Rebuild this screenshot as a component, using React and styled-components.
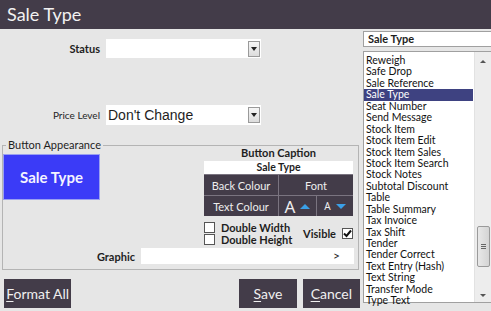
import styled, { createGlobalStyle } from "styled-components";

const Global = createGlobalStyle`
  html, body { margin: 0; padding: 0; background: #e6e6e6; }
  body { font-family: "Lato", "Noto Sans", sans-serif; color: #1e1e1e; }
  * { box-sizing: border-box; }
`;

const Screen = styled.div`
  width: 491px;
  height: 311px;
  overflow: hidden;
  background: #e6e6e6;
  display: flex;
  flex-direction: column;
`;

const TitleBar = styled.div`
  height: 29px;
  background: #433c49;
  color: #f2f2f2;
  font-size: 18px;
  line-height: 29px;
  padding-left: 7px;
  flex: none;
`;

const Body = styled.div`
  display: flex;
  flex: 1;
`;

const LeftPane = styled.div`
  width: 360px;
  display: flex;
  flex-direction: column;
`;

const FieldRow = styled.div`
  display: flex;
  align-items: center;
  margin-top: ${(p) => p.$top}px;
  height: ${(p) => p.$h || 19}px;
`;

const Label = styled.div`
  width: ${(p) => p.$w || 106}px;
  text-align: right;
  padding-right: 6px;
  font-size: ${(p) => p.$size || 11}px;
  font-weight: ${(p) => (p.$bold ? 700 : 400)};
`;

const Select = styled.div`
  width: 155px;
  height: 100%;
  background: #fff;
  display: flex;
  align-items: center;
  justify-content: space-between;
  padding: 0 1px 0 2px;
  font-family: "Liberation Sans", Arial, sans-serif;
  font-size: 14px;
`;

const DropBtn = styled.div`
  width: 12px;
  height: 16px;
  border: 1px solid #9a9a9a;
  background: linear-gradient(#f6f6f6, #dcdcdc);
  display: flex;
  align-items: center;
  justify-content: center;
  &::after {
    content: "";
    border-left: 3px solid transparent;
    border-right: 3px solid transparent;
    border-top: 4px solid #222;
  }
`;

const Group = styled.fieldset`
  margin: 14px 1px 0 2px;
  padding: 0 0 5px;
  border: 1px solid #b4b4b4;
  min-width: 0;
`;

const Legend = styled.legend`
  margin-left: 3px;
  padding: 0 2px;
  font-size: 11px;
  color: #1e1e1e;
  line-height: 12px;
`;

const GroupInner = styled.div`
  display: grid;
  grid-template-columns: 98px 1fr;
  align-items: start;
`;

const Preview = styled.div`
  width: 97px;
  height: 46px;
  margin-top: 3px;
  background: #3b3bf7;
  border: 1px solid #9aa0f0;
  color: #f4f4ff;
  font-weight: 700;
  font-size: 15px;
  display: flex;
  align-items: center;
  justify-content: center;
`;

const CaptionCol = styled.div`
  margin: -4px 0 0 103px;
  width: 149px;
  display: flex;
  flex-direction: column;
`;

const CaptionTitle = styled.div`
  text-align: center;
  font-weight: 700;
  font-size: 11px;
  line-height: 12px;
`;

const CaptionInput = styled.div`
  background: #fff;
  height: 13px;
  margin-top: 2px;
  text-align: center;
  font-weight: 700;
  font-size: 10.5px;
  line-height: 13px;
`;

const Grid = styled.div`
  display: grid;
  grid-template-columns: 74px 37px 36px;
  grid-template-rows: 20px 20px;
  gap: 1px;
  background: #7a7480;
  padding: 1px 0 0;
`;

const Cell = styled.div`
  background: #433c49;
  color: #eeeeee;
  font-size: 11px;
  display: flex;
  align-items: center;
  justify-content: center;
  gap: 5px;
  grid-column: ${(p) => p.$span || "auto"};
`;

const BigA = styled.span`
  font-size: ${(p) => p.$size}px;
  line-height: 1;
  font-family: "Noto Sans", sans-serif;
`;

const Tri = styled.span`
  width: 0;
  height: 0;
  border-left: 5px solid transparent;
  border-right: 5px solid transparent;
  ${(p) =>
    p.$down
      ? "border-top: 5px solid #3aa0e8;"
      : "border-bottom: 5px solid #3aa0e8;"}
`;

const Checks = styled.div`
  display: flex;
  justify-content: space-between;
  align-items: center;
  margin-top: 5px;
`;

const CheckList = styled.div`
  display: flex;
  flex-direction: column;
`;

const CheckRow = styled.div`
  display: flex;
  align-items: center;
  gap: 6px;
  font-size: 11px;
  font-weight: 700;
  height: 12px;
`;

const Box = styled.span`
  width: 11px;
  height: 11px;
  background: #fff;
  border: 1px solid #555;
  display: flex;
  align-items: center;
  justify-content: center;
`;

const GraphicRow = styled.div`
  display: flex;
  align-items: center;
  margin-top: 3px;
  height: 16px;
`;

const GraphicInput = styled.div`
  width: 213px;
  height: 16px;
  background: #fff;
  font-size: 12px;
  text-align: right;
  padding-right: 14px;
  line-height: 16px;
`;

const ButtonBar = styled.div`
  display: flex;
  gap: 6px;
  margin: 9px 0 0 4px;
`;

const Btn = styled.div`
  width: ${(p) => p.$w}px;
  height: 29px;
  background: #433c49;
  color: #f0f0f0;
  font-size: 14px;
  display: flex;
  align-items: center;
  justify-content: center;
  margin-left: ${(p) => p.$ml || 0}px;
  u { text-decoration-thickness: 1px; text-underline-offset: 2px; }
`;

const RightPane = styled.div`
  width: 128px;
  margin-left: 3px;
  display: flex;
  flex-direction: column;
`;

const Search = styled.div`
  margin-top: 2px;
  height: 16px;
  background: #fff;
  border: 1px solid #a0a0a0;
  border-right: none;
  font-size: 11px;
  font-weight: 700;
  padding-left: 4px;
  line-height: 14px;
`;

const ListBox = styled.div`
  margin-top: 4px;
  height: 252px;
  background: #fff;
  border: 1px solid #a0a0a0;
  border-right: none;
  display: flex;
`;

const Items = styled.div`
  flex: 1;
  padding-top: 3px;
`;

const Item = styled.div`
  height: 11.45px;
  line-height: 11.45px;
  font-size: 10.5px;
  padding-left: 2px;
  white-space: nowrap;
  background: ${(p) => (p.$sel ? "#3e4281" : "transparent")};
  color: ${(p) => (p.$sel ? "#fff" : "#111")};
  margin-right: 1px;
`;

const Scroll = styled.div`
  width: 17px;
  background: #ededed;
  border-left: 1px solid #e2e2e2;
  display: flex;
  flex-direction: column;
  align-items: center;
  padding-top: 8px;
`;

const ScrollArrow = styled.span`
  width: 0;
  height: 0;
  border-left: 3px solid transparent;
  border-right: 3px solid transparent;
  ${(p) => (p.$down ? "border-top: 3px solid #555;" : "border-bottom: 3px solid #555;")}
`;

const Thumb = styled.div`
  width: 13px;
  height: 41px;
  margin-top: 163px;
  margin-bottom: auto;
  background: linear-gradient(90deg, #e8e8e8, #d4d4d4);
  border: 1px solid #9a9a9a;
  border-radius: 2px;
  display: flex;
  flex-direction: column;
  align-items: center;
  justify-content: center;
  gap: 1px;
  span { width: 5px; height: 1px; background: #666; }
`;

const ScrollEnd = styled.div`
  height: 14px;
  display: flex;
  align-items: center;
`;

const items = [
  "Reweigh", "Safe Drop", "Sale Reference", "Sale Type", "Seat Number",
  "Send Message", "Stock Item", "Stock Item Edit", "Stock Item Sales",
  "Stock Item Search", "Stock Notes", "Subtotal Discount", "Table",
  "Table Summary", "Tax Invoice", "Tax Shift", "Tender", "Tender Correct",
  "Text Entry (Hash)", "Text String", "Transfer Mode", "Type Text",
];

const Check = () => (
  <svg width="9" height="9" viewBox="0 0 9 9">
    <path d="M1 4.5 L3.5 7 L8 1.5" stroke="#111" strokeWidth="2" fill="none" />
  </svg>
);

export default function App() {
  return (
    <Screen>
      <Global />
      <TitleBar>Sale Type</TitleBar>
      <Body>
        <LeftPane>
          <FieldRow $top={10}>
            <Label $bold>Status</Label>
            <Select>
              <span />
              <DropBtn />
            </Select>
          </FieldRow>
          <FieldRow $top={47} $h={20}>
            <Label $size={10}>Price Level</Label>
            <Select>
              <span>Don't Change</span>
              <DropBtn />
            </Select>
          </FieldRow>
          <Group>
            <Legend>Button Appearance</Legend>
            <GroupInner>
              <Preview>Sale Type</Preview>
              <CaptionCol>
                <CaptionTitle>Button Caption</CaptionTitle>
                <CaptionInput>Sale Type</CaptionInput>
                <Grid>
                  <Cell>Back Colour</Cell>
                  <Cell $span="span 2">Font</Cell>
                  <Cell>Text Colour</Cell>
                  <Cell>
                    <BigA $size={17}>A</BigA>
                    <Tri />
                  </Cell>
                  <Cell>
                    <BigA $size={10}>A</BigA>
                    <Tri $down />
                  </Cell>
                </Grid>
                <Checks>
                  <CheckList>
                    <CheckRow><Box />Double Width</CheckRow>
                    <CheckRow><Box />Double Height</CheckRow>
                  </CheckList>
                  <CheckRow>
                    Visible<Box><Check /></Box>
                  </CheckRow>
                </Checks>
              </CaptionCol>
            </GroupInner>
            <GraphicRow>
              <Label $w={138} $bold>Graphic</Label>
              <GraphicInput>&gt;</GraphicInput>
            </GraphicRow>
          </Group>
          <ButtonBar>
            <Btn $w={68}><span><u>F</u>ormat All</span></Btn>
            <Btn $w={58} $ml={162}><span><u>S</u>ave</span></Btn>
            <Btn $w={58}><span><u>C</u>ancel</span></Btn>
          </ButtonBar>
        </LeftPane>
        <RightPane>
          <Search>Sale Type</Search>
          <ListBox>
            <Items>
              {items.map((t) => (
                <Item key={t} $sel={t === "Sale Type"}>{t}</Item>
              ))}
            </Items>
            <Scroll>
              <ScrollArrow />
              <Thumb><span /><span /><span /></Thumb>
              <ScrollEnd><ScrollArrow $down /></ScrollEnd>
            </Scroll>
          </ListBox>
        </RightPane>
      </Body>
    </Screen>
  );
}
